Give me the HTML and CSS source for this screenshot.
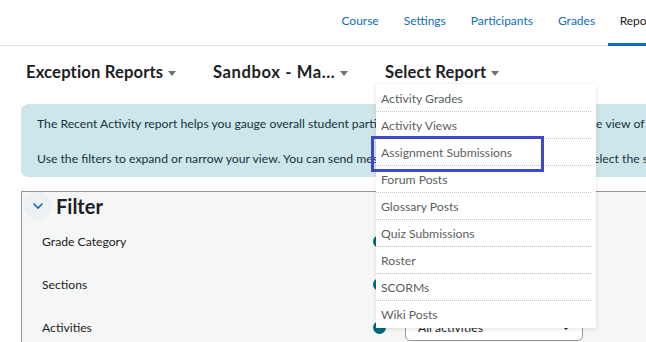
FILE: index.html
```html
<!DOCTYPE html>
<html>
<head>
<meta charset="utf-8">
<link rel="stylesheet" href="styles.css">
</head>
<body>
<div class="page">
  <nav class="topnav">
    <a class="navlink">Course</a>
    <a class="navlink">Settings</a>
    <a class="navlink">Participants</a>
    <a class="navlink">Grades</a>
    <a class="navlink active">Reports</a>
  </nav>
  <div class="heads">
    <div class="head h1">Exception Reports<span class="caret"></span></div>
    <div class="head h2">Sandbox - Ma...<span class="caret"></span></div>
    <div class="head h3">Select Report<span class="caret"></span></div>
  </div>
  <div class="alert">
    <p>The Recent Activity report helps you gauge overall student participation in your course, giving you a whole view of what students are doing.</p>
    <p>Use the filters to expand or narrow your view. You can send messages to any students you need to, just select the students below.</p>
  </div>
  <div class="filter">
    <div class="filter-title">
      <span class="chev"><svg width="12" height="8" viewBox="0 0 12 8"><path d="M1.5 1.5 L6 6 L10.5 1.5" fill="none" stroke="#0f6cbf" stroke-width="1.6"/></svg></span>
      <span class="ftext">Filter</span>
    </div>
    <div class="frow"><span class="flabel">Grade Category</span><span class="help"></span></div>
    <div class="frow"><span class="flabel">Sections</span><span class="help"></span></div>
    <div class="frow"><span class="flabel">Activities</span><span class="help"></span><span class="select">All activities<span class="scaret"></span></span></div>
  </div>
  <ul class="menu">
    <li>Activity Grades</li>
    <li>Activity Views</li>
    <li class="hl">Assignment Submissions</li>
    <li>Forum Posts</li>
    <li>Glossary Posts</li>
    <li>Quiz Submissions</li>
    <li>Roster</li>
    <li>SCORMs</li>
    <li class="last">Wiki Posts</li>
  </ul>
</div>
</body>
</html>
```
FILE: styles.css
```css
* { box-sizing: border-box; }
html, body { margin: 0; padding: 0; }
body {
  width: 646px; height: 342px; overflow: hidden; background: #fff;
  font-family: "Lato", "Noto Sans", sans-serif; color: #1d2125;
}
.page { position: relative; width: 646px; height: 342px; overflow: hidden; }
.topnav {
  height: 46px; border-bottom: 1px solid #dee2e6;
  display: flex; justify-content: flex-end; align-items: stretch;
  white-space: nowrap;
}
.navlink {
  font-size: 12px; color: #0f6cbf; padding: 13px 12.5px 0 12.5px;
  border-bottom: 3px solid transparent; margin-bottom: -1px;
}
.navlink.active { color: #1d2125; border-bottom-color: #0f6cbf; margin-right: -27px; padding-left: 12px; }
.heads { display: flex; align-items: center; height: 52px; padding-left: 26px; }
.head { font-size: 16.6px; font-weight: 700; white-space: nowrap; display: flex; align-items: center; letter-spacing: 0.15px; }
.h1 { width: 187px; }
.h2 { width: 172px; letter-spacing: 0.6px; }
.caret {
  display: inline-block; width: 0; height: 0; margin-left: 5px; margin-top: 3px;
  border-left: 4.5px solid transparent; border-right: 4.5px solid transparent;
  border-top: 5px solid #6a737b;
}
.alert {
  margin-left: 21px; width: 700px; height: 73px; margin-top: 6px;
  background: #cde6ea; border-radius: 7px; padding: 11px 16px;
  font-size: 12.2px; color: #14333d; white-space: nowrap; overflow: hidden;
}
.alert p { margin: 0 0 18px 0; line-height: 17px; }
.filter {
  margin-left: 21px; margin-top: 14px; width: 700px; height: 200px;
  border: 1px solid #8f959e; background: #f5f6f6; padding: 0;
}
.filter-title { display: flex; align-items: center; height: 28px; padding-left: 2px; }
.chev {
  width: 28px; height: 28px; border-radius: 50%; background: #eef1f4;
  display: flex; align-items: center; justify-content: center;
}
.ftext { font-size: 20px; font-weight: 700; margin-left: 4px; color: #1d2125; }
.frow { position: relative; height: 43px; display: flex; align-items: center; padding-left: 20px; font-size: 12.2px; }
.flabel { width: 331px; }
.help {
  width: 13px; height: 13px; border-radius: 50%; background: #00697b;
}
.select {
  margin-left: 19px; width: 178px; height: 27px;
  border: 1px solid #8f959e; border-radius: 5px; background: #fff;
  font-size: 12.2px; padding: 4px 12px; display: flex; justify-content: space-between; align-items: center;
}
.scaret {
  width: 0; height: 0; border-left: 4px solid transparent; border-right: 4px solid transparent;
  border-top: 4px solid #1d2125;
}
.menu {
  position: absolute; left: 376px; top: 84px; width: 220px; height: 244px;
  margin: 0; padding: 1px 0 0 0; list-style: none; background: #fff;
  box-shadow: 0 1px 4px rgba(0,0,0,0.12);
}
.menu li {
  height: 27px; line-height: 28px; font-size: 12.2px; color: #5b5f63;
  padding-left: 5px; margin-right: 5px; border-bottom: 1px dotted #c4c6c8;
  position: relative;
}
.menu li.last { border-bottom: none; }
.menu li.hl::after {
  content: ""; position: absolute; left: -5px; top: -3px; width: 167px; height: 30px;
  border: 3px solid #3f48cc;
}
```
